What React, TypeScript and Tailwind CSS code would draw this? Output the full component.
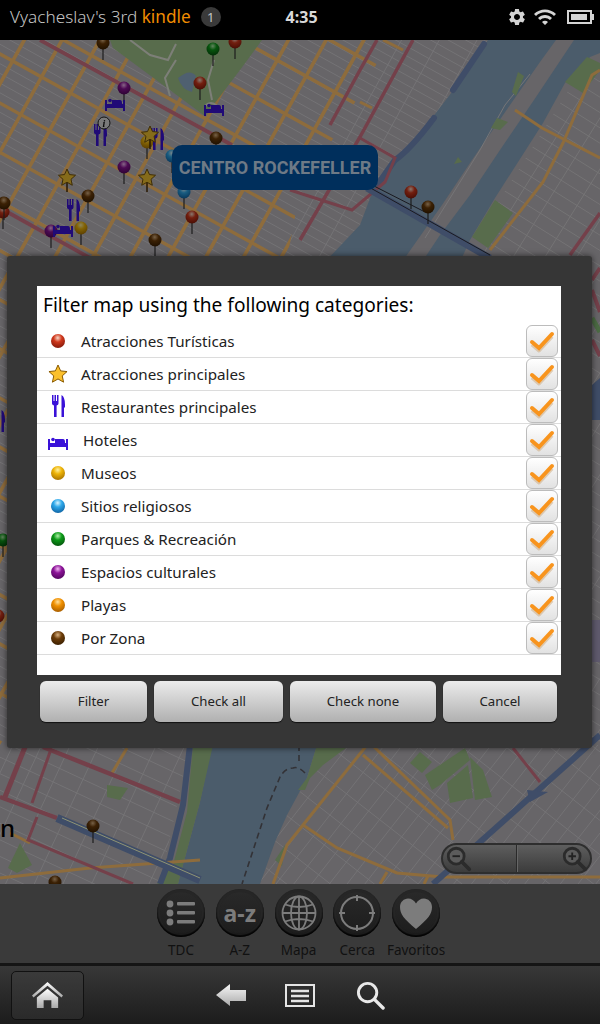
import { MdSettings, MdWifi } from "react-icons/md";

const categories = [
  { label: "Atracciones Turísticas", icon: "red" },
  { label: "Atracciones principales", icon: "star" },
  { label: "Restaurantes principales", icon: "fork" },
  { label: "Hoteles", icon: "bed" },
  { label: "Museos", icon: "yellow" },
  { label: "Sitios religiosos", icon: "blue" },
  { label: "Parques & Recreación", icon: "green" },
  { label: "Espacios culturales", icon: "purple" },
  { label: "Playas", icon: "orange" },
  { label: "Por Zona", icon: "brown" },
];

const balls: Record<string, [string, string, string]> = {
  red: ["#f8d8c8", "#d0381c", "#7c1608"],
  yellow: ["#fff2a0", "#eeb408", "#a06c00"],
  blue: ["#d8f4ff", "#2ea8ea", "#0c5c9c"],
  green: ["#b0f0a8", "#0c9a18", "#044c0c"],
  purple: ["#f4b8f4", "#8c1498", "#4c0458"],
  orange: ["#ffe09c", "#f09000", "#a05800"],
  brown: ["#d8b080", "#6c3c08", "#341c00"],
};

const LAND = "#676568";
const ROAD = "#8e6c3c";
const RED = "#74404a";
const WATER = "#4b5c6b";
const PARK = "#586c4c";
const STREET = "#767577";
const HIGHWAY = "#3f4d68";

function gridPath(spacing: number, offset = 0) {
  let d = "";
  for (let x = -1200 + offset; x < 1200; x += spacing) d += `M${x} -1200V1200`;
  return d;
}

function BallDefs() {
  return (
    <defs>
      {Object.entries(balls).map(([name, [a, b, c]]) => (
        <radialGradient key={name} id={`ball-${name}`} cx="0.48" cy="0.28" r="0.78">
          <stop offset="0" stopColor={a} />
          <stop offset="0.38" stopColor={b} />
          <stop offset="1" stopColor={c} />
        </radialGradient>
      ))}
    </defs>
  );
}

function StarShape({ x, y, r, fill, stroke }: { x: number; y: number; r: number; fill: string; stroke: string }) {
  const pts = Array.from({ length: 10 }, (_, i) => {
    const rad = i % 2 ? r * 0.47 : r;
    const a = (Math.PI / 5) * i - Math.PI / 2;
    return `${x + rad * Math.cos(a)},${y + rad * Math.sin(a)}`;
  }).join(" ");
  return <polygon points={pts} fill={fill} stroke={stroke} strokeWidth="1" />;
}

function ForkShape({ x, y }: { x: number; y: number }) {
  return (
    <g transform={`translate(${x} ${y})`} fill="#3a12d8">
      <path d="M0 0h1.500v6h1V0h1.500v6h1V0H6.500v8.500Q6.500 10 4.600 10.500V22H2V10.500Q0 10 0 8.500Z" />
      <path d="M9.500 22V0Q13 2 13 9.500V12.500h-1V22Z" />
    </g>
  );
}

function BedShape({ x, y }: { x: number; y: number }) {
  return (
    <g transform={`translate(${x} ${y})`} fill="#3a12d8">
      <path d="M0 3h2v4h16V3h2v11h-2v-3H2v3H0Z" />
      <circle cx="5" cy="3.500" r="1.800" />
      <path d="M7 3h8q2 0 2 3v1H7Z" />
    </g>
  );
}

function Pin({ x, y, c, stem = 17 }: { x: number; y: number; c: string; stem?: number }) {
  return (
    <g>
      <line x1={x} y1={y} x2={x} y2={y + stem} stroke="#333" strokeWidth="1.200" />
      <circle cx={x} cy={y} r="6.500" fill={`url(#ball-${c})`} />
    </g>
  );
}

function MapStar({ x, y }: { x: number; y: number }) {
  return (
    <g>
      <line x1={x} y1={y} x2={x} y2={y + 14} stroke="#4a2c00" strokeWidth="1.500" />
      <StarShape x={x} y={y} r={9} fill="#f2c230" stroke="#70500a" />
    </g>
  );
}

function CityMap() {
  return (
    <svg viewBox="0 40 600 844" className="absolute inset-0 h-full w-full">
      <BallDefs />
      <defs>
        <clipPath id="west">
          <polygon points="0,40 500,40 340,270 0,745" />
        </clipPath>
        <clipPath id="west-roads">
          <polygon points="0,40 390,40 345,120 300,190 285,270 0,745" />
        </clipPath>
        <clipPath id="east">
          <polygon points="600,40 600,745 500,745 460,262" />
        </clipPath>
        <clipPath id="brooklyn">
          <polygon points="317,745 600,745 600,884 255,884" />
        </clipPath>
        <clipPath id="lic">
          <polygon points="0,745 190,745 160,884 0,884" />
        </clipPath>
      </defs>
      <rect x="0" y="40" width="600" height="844" fill={LAND} />

      {/* manhattan streets */}
      <g fill="none">
        <g clipPath="url(#west)">
          <g transform="rotate(29 200 150)">
            <path d={gridPath(33, 5)} stroke={STREET} strokeWidth="0.800" />
            <path d={gridPath(8.500, 2)} stroke={STREET} strokeWidth="0.800" transform="rotate(90 200 150)" />
          </g>
        </g>
        <g clipPath="url(#west-roads)">
          <g transform="rotate(29 200 150)">
            <path d={gridPath(33, 5)} stroke={ROAD} strokeWidth="3.600" />
            <path d={gridPath(43, 37)} stroke={ROAD} strokeWidth="3.400" transform="rotate(90 200 150)" />
          </g>
        </g>
        <path d="M40 40L232 145M0 208L90 258" stroke={RED} strokeWidth="3.800" />
        <path d="M377 40L360 70L330 125M413 40L360 137L300 240" stroke={RED} strokeWidth="3.500" />
        <path d="M383 40L403 50M360 102L372 108" stroke={ROAD} strokeWidth="3" />
      </g>

      {/* queens streets */}
      <g clipPath="url(#east)" fill="none">
        <g transform="rotate(32 540 180)">
          <path d={gridPath(27, 3)} stroke={STREET} strokeWidth="0.800" />
          <path d={gridPath(13)} stroke={STREET} strokeWidth="0.800" transform="rotate(90 540 180)" />
        </g>
      </g>

      {/* south side streets */}
      <g clipPath="url(#brooklyn)" fill="none">
        <g transform="rotate(38 400 800)">
          <path d={gridPath(14)} stroke={STREET} strokeWidth="0.800" />
          <path d={gridPath(27, 8)} stroke={STREET} strokeWidth="0.800" transform="rotate(90 400 800)" />
        </g>
      </g>
      <g clipPath="url(#lic)" fill="none">
        <g transform="rotate(25 80 800)">
          <path d={gridPath(26)} stroke={STREET} strokeWidth="0.800" />
          <path d={gridPath(15)} stroke={STREET} strokeWidth="0.800" transform="rotate(90 80 800)" />
        </g>
      </g>

      {/* central park */}
      <polygon points="110,40 262,40 240,70 205,116 113,48" fill={PARK} />
      <path d="M130 40L150 55L168 60L176 44M176 60L165 78L170 96M214 60L208 80L212 100" fill="none" stroke="#7d7f78" strokeWidth="2" />
      <path d="M178 78Q190 68 196 76L192 92Q182 90 178 78Z" fill="#4f6070" />
      <path d="M205 106q6-6 12 0" fill="none" stroke="#7d7f78" strokeWidth="2" />

      {/* east river */}
      <polygon points="488,40 563,40 517,107 480,163 450,210 415,262 325,262 360,225 375,185 400,155 432,118 452,92" fill={WATER} />
      <polygon points="574,40 600,40 600,53 590,57 565,83 543,123 495,198 470,240 460,262 405,262 450,210 480,163 517,107 563,40" fill={WATER} />
      <polygon points="540,62 556,40 574,40 534,100 500,150 470,195 440,235 422,262 402,262 442,205 472,160 510,105" fill={LAND} />
      <path d="M484 44L453 90" stroke={HIGHWAY} strokeWidth="6" strokeLinecap="round" fill="none" />
      <path d="M434 118Q410 150 395 160L378 184" stroke={HIGHWAY} strokeWidth="6" strokeLinecap="round" fill="none" />
      <path d="M530 74L505 105L480 150L452 195L425 238" stroke={STREET} strokeWidth="1" fill="none" />

      {/* island parks and queens roads */}
      <polygon points="518,72 524,76 516,96 512,92" fill={PARK} />
      <polygon points="497,118 508,122 500,130 491,128" fill={PARK} />
      <polygon points="458,157 462,162 454,164" fill={PARK} />
      <polygon points="565,82 587,57 600,63 600,70 583,93" fill={PARK} />
      <polygon points="495,200 513,213 488,248 472,237" fill={PARK} />
      <path d="M600 70L592 75L563 143L543 182L490 250" stroke={ROAD} strokeWidth="3" fill="none" />
      <path d="M515 110L542 128L600 158" stroke={ROAD} strokeWidth="3" fill="none" />
      <path d="M600 213L570 255" stroke={RED} strokeWidth="3.500" />
      <path d="M360 138L395 158L385 182L352 210L290 190" stroke={RED} strokeWidth="3" fill="none" />
      <path d="M367 188L490 258" stroke={HIGHWAY} strokeWidth="7" />
      <path d="M367 186L490 255M372 185L425 212" stroke="#1a1a20" strokeWidth="1" fill="none" />

      {/* right edge beside the dialog */}
      <path d="M592 280L600 268M592 290L600 312M592 340L600 356" stroke={RED} strokeWidth="4" />
      <path d="M592 318L600 332" stroke="#4c6b44" strokeWidth="5" />
      <polygon points="592,385 600,378 600,420 592,420" fill={HIGHWAY} />
      <polygon points="592,620 600,620 600,662 592,662" fill="#5f5a6d" />

      {/* south: river */}
      <polygon points="212,745 317,745 307,778 287,815 275,842 260,884 178,884 183,865 200,802" fill={WATER} />
      <polygon points="193,745 213,745 200,802 183,865 178,884 157,884 173,865 187,812" fill={PARK} />
      <path d="M190 745L183 805L170 858L160 884" stroke={HIGHWAY} strokeWidth="6" fill="none" />
      <path d="M299 745V765M305 773Q298 766 293 768Q285 768 280 777L267 808L242 884" stroke="#333236" strokeWidth="1.600" strokeDasharray="6 4" fill="none" />
      <polygon points="317,745 350,745 323,765 310,778 305,790 298,790 307,778" fill={PARK} />

      {/* south: parks and roads */}
      <polygon points="410,763 420,752 432,762 422,773" fill={PARK} />
      <polygon points="425,775 465,748 470,760 440,785 432,790" fill={PARK} />
      <polygon points="447,783 468,765 473,798 450,803" fill={PARK} />
      <polygon points="470,757 483,770 492,797 475,800" fill={PARK} />
      <polygon points="275,860 285,845 282,866" fill={PARK} />
      <g fill="none" stroke={ROAD} strokeWidth="3">
        <path d="M367 745L303 825L287 845L273 884" />
        <path d="M363 755L448 828" />
        <path d="M372 745L450 820L453 840" />
        <path d="M303 825L337 848L397 873L443 877H600" />
        <path d="M387 872L380 884M428 876L424 884" />
        <path d="M127 748L112 773M0 878L90 868L200 860M10 833L30 843" />
      </g>
      <path d="M433 884L600 735" stroke={HIGHWAY} strokeWidth="6" />
      <path d="M513 748L540 782" stroke={RED} strokeWidth="3" />
      <polygon points="527,790 548,792 530,802" fill={HIGHWAY} />

      <g fill="none" stroke={RED}>
        <path d="M25 747L5 797" strokeWidth="5" />
        <path d="M50 752L32 803" strokeWidth="3" />
        <path d="M0 797L57 818" strokeWidth="4" />
        <path d="M37 817L28 840L133 884" strokeWidth="3" />
        <path d="M43 747L133 783L180 802" strokeWidth="4.500" />
      </g>
      <path d="M57 818L200 880" stroke={HIGHWAY} strokeWidth="8" />
      <path d="M62 818L200 878" stroke="#8f9474" strokeWidth="1" />
      <polygon points="107,785 128,788 120,800 107,797" fill={PARK} />
      <polygon points="20,843 32,865 17,873 8,868" fill={PARK} />

      {/* pins dimmed like the map */}
      <g className="brightness-[.55]">
        <Pin x={103} y={43} c="brown" />
        <Pin x={213} y={49} c="green" />
        <Pin x={235} y={42} c="red" />
        <Pin x={124} y={88} c="purple" />
        <Pin x={200} y={83} c="red" />
        <Pin x={147} y={142} c="yellow" />
        <Pin x={216} y={138} c="brown" />
        <Pin x={172} y={156} c="blue" />
        <Pin x={124} y={167} c="purple" />
        <Pin x={88} y={196} c="brown" />
        <Pin x={184} y={192} c="blue" />
        <Pin x={192} y={217} c="red" />
        <Pin x={3} y={212} c="red" />
        <Pin x={4} y={203} c="brown" />
        <Pin x={51} y={231} c="purple" />
        <Pin x={81} y={228} c="yellow" />
        <Pin x={155} y={240} c="brown" />
        <Pin x={411} y={192} c="red" />
        <Pin x={428} y={207} c="brown" />
        <Pin x={93} y={826} c="brown" />
        <Pin x={55} y={882} c="brown" />
        <Pin x={3} y={540} c="green" />
        <Pin x={-2} y={616} c="red" />
        <ForkShape x={94} y={124} />
        <ForkShape x={151} y={128} />
        <ForkShape x={67} y={199} />
        <ForkShape x={-8} y={410} />
        <MapStar x={150} y={135} />
        <MapStar x={67} y={178} />
        <MapStar x={147} y={178} />
        <BedShape x={105} y={97} />
        <BedShape x={204} y={102} />
        <BedShape x={53} y={223} />
        <circle cx="104" cy="123" r="6" fill="#ddd" stroke="#222" />
        <text x="104" y="127" textAnchor="middle" fontSize="10" fontStyle="italic" fontWeight="700" fontFamily="Liberation Serif, serif" fill="#111">i</text>
      </g>
    </svg>
  );
}

function StatusBar() {
  return (
    <div className="relative flex h-10 items-center bg-black pb-[6px] pl-[10px] pr-2 text-[#c4c4c4]">
      <span className="text-[17.2px] font-light leading-none [font-family:'Noto_Sans',sans-serif]">
        Vyacheslav's 3rd <span className="font-normal text-[#f08c00]">kindle</span>
      </span>
      <span className="ml-[10px] grid h-5 w-5 place-items-center rounded-full bg-[#3a3a3a] text-[13px] leading-none [font-family:'Noto_Sans',sans-serif]">1</span>
      <span className="ml-[65px] text-[16px] font-bold leading-none text-[#d8d8d8] [font-family:'Noto_Sans',sans-serif]">4:35</span>
      <div className="ml-auto flex items-center gap-[6px]">
        <MdSettings size={20} className="text-[#d4d4d4]" />
        <MdWifi size={24} className="text-[#d4d4d4]" />
        <div className="relative ml-[4px] h-[14px] w-[25px] border-2 border-[#d4d4d4] p-[2px]">
          <div className="h-full w-[16px] bg-[#d4d4d4]" />
          <div className="absolute -right-[4px] top-[2px] h-[6px] w-[2px] bg-[#d4d4d4]" />
        </div>
      </div>
    </div>
  );
}

function RowIcon({ icon }: { icon: string }) {
  return (
    <svg viewBox="0 0 30 30" className="h-[30px] w-[30px] shrink-0">
      {icon === "star" && <StarShape x={15} y={15.5} r={9.5} fill="#fbc02d" stroke="#8a5a00" />}
      {icon === "fork" && <ForkShape x={9} y={3} />}
      {icon === "bed" && <BedShape x={5} y={11} />}
      {balls[icon] && <circle cx="15" cy="15" r="7" fill={`url(#ball-${icon})`} />}
    </svg>
  );
}

function Checkbox() {
  return (
    <div className="h-8 w-8 shrink-0 rounded-[6px] border border-[#bcbcbc] bg-gradient-to-b from-white to-[#e2e2e2]">
      <svg viewBox="0 0 30 30" className="h-full w-full">
        <polyline points="5,17 12,23 25,9" fill="none" stroke="#c9a06a" strokeOpacity="0.45" strokeWidth="4" strokeLinejoin="round" transform="translate(0 1.5)" />
        <polyline points="5,16 12,22 25,8" fill="none" stroke="#f8941d" strokeWidth="4" strokeLinecap="round" strokeLinejoin="miter" />
      </svg>
    </div>
  );
}

function DialogButton({ label, className }: { label: string; className: string }) {
  return (
    <button className={`h-[41px] rounded-[6px] bg-gradient-to-b from-[#ececec] to-[#b0b0b0] text-[13.2px] text-[#222] shadow-[0_1px_1px_#111] ${className}`}>
      {label}
    </button>
  );
}

function FilterDialog() {
  return (
    <div className="absolute left-[7px] top-[216px] h-[492px] w-[585px] rounded-[3px] bg-[#363636] px-[30px] pt-[30px] shadow-[0_0_6px_rgba(0,0,0,.6)] [font-family:'Noto_Sans',sans-serif]">
      <div className="h-[389px] w-[524px] bg-white">
        <svg className="absolute h-0 w-0"><BallDefs /></svg>
        <div className="flex h-[39px] items-center pl-[6px] pt-[1px] text-[19.1px] leading-none text-black">
          Filter map using the following categories:
        </div>
        {categories.map((c) => (
          <div key={c.label} className="flex h-[33px] items-center border-b border-[#dcdcdc] pl-[6px] pr-[3px] text-[15.2px] text-[#222]">
            <RowIcon icon={c.icon} />
            <span className={c.icon === "bed" ? "ml-[10px]" : "ml-2"}>{c.label}</span>
            <div className="ml-auto h-8"><Checkbox /></div>
          </div>
        ))}
      </div>
      <div className="mt-[6px] flex gap-[7px] pl-[3px]">
        <DialogButton label="Filter" className="w-[107px]" />
        <DialogButton label="Check all" className="w-[129px]" />
        <DialogButton label="Check none" className="w-[146px]" />
        <DialogButton label="Cancel" className="w-[114px]" />
      </div>
    </div>
  );
}

function MagnifierGlyph({ minus }: { minus?: boolean }) {
  return (
    <svg viewBox="0 0 30 30" className="h-[28px] w-[28px]" fill="none" stroke="#2b2b2b">
      <circle cx="12" cy="12" r="8.500" strokeWidth="3" fill="#5c5c5c" />
      <path d="M18 18l8 8" strokeWidth="4" strokeLinecap="round" />
      <path d={minus ? "M8 12h8" : "M8 12h8M12 8v8"} strokeWidth="2" stroke="#222" />
    </svg>
  );
}

function ZoomControl() {
  return (
    <div className="absolute left-[441px] top-[803px] flex h-[31px] w-[151px] rounded-full border-2 border-[#2e2e2e] bg-gradient-to-b from-[#5e5e5e] to-[#3c3c3c]">
      <div className="flex w-[74px] items-center border-r border-[#2a2a2a] pl-[2px]">
        <MagnifierGlyph minus />
      </div>
      <div className="flex flex-1 items-center justify-end border-l border-[#666] pr-[1px]">
        <MagnifierGlyph />
      </div>
    </div>
  );
}

function RoundIcon({ name }: { name: string }) {
  if (name === "list")
    return (
      <svg viewBox="0 0 48 48" className="h-full w-full" fill="#7c7c7c">
        <circle cx="13" cy="15" r="3.400" /><circle cx="13" cy="24" r="3.400" /><circle cx="13" cy="33" r="3.400" />
        <rect x="20" y="13" width="18" height="3.400" rx="1" /><rect x="20" y="22" width="18" height="3.400" rx="1" /><rect x="20" y="31" width="18" height="3.400" rx="1" />
      </svg>
    );
  if (name === "az")
    return <span className="text-[23px] font-bold leading-none text-[#7c7c7c] [font-family:'Noto_Sans',sans-serif]">a-z</span>;
  if (name === "globe")
    return (
      <svg viewBox="0 0 48 48" className="h-full w-full" fill="none" stroke="#7c7c7c" strokeWidth="1.800">
        <circle cx="24" cy="24" r="16.500" />
        <ellipse cx="24" cy="24" rx="8" ry="16.500" />
        <path d="M24 7.500v33M7.500 24h33M10 15.500q14 5 28 0M10 32.500q14-5 28 0" />
      </svg>
    );
  if (name === "target")
    return (
      <svg viewBox="0 0 48 48" className="h-full w-full" fill="none" stroke="#7c7c7c" strokeWidth="2">
        <circle cx="24" cy="24" r="16" />
        <path d="M24 6v6M24 36v6M6 24h6M36 24h6" />
      </svg>
    );
  return (
    <svg viewBox="0 0 48 48" className="h-full w-full" fill="#7c7c7c">
      <path d="M24 40C12 30 8 25 8 18c0-5 4-8.500 8-8.500 3.500 0 6.500 2 8 5 1.500-3 4.500-5 8-5 4 0 8 3.500 8 8.500 0 7-4 12-16 22Z" />
    </svg>
  );
}

const tools = [
  { label: "TDC", icon: "list" },
  { label: "A-Z", icon: "az" },
  { label: "Mapa", icon: "globe" },
  { label: "Cerca", icon: "target" },
  { label: "Favoritos", icon: "heart" },
];

function Toolbar() {
  return (
    <div className="flex h-[79px] justify-center gap-[10.75px] bg-[#3a3a3a] pr-[3px] pt-[5px] [font-family:'Noto_Sans',sans-serif]">
      {tools.map((t) => (
        <div key={t.label} className="flex w-[48px] flex-col items-center">
          <div className="grid h-[48px] w-[48px] place-items-center rounded-full bg-gradient-to-b from-[#2a2a2a] to-[#1c1c1c] shadow-[inset_0_-2px_2px_#000,inset_0_0_0_3px_#262626]">
            <RoundIcon name={t.icon} />
          </div>
          <span className="mt-[4px] whitespace-nowrap text-[13.5px] leading-[18px] text-[#111]">{t.label}</span>
        </div>
      ))}
    </div>
  );
}

function NavBar() {
  return (
    <div className="border-t-[3px] border-[#151515] bg-gradient-to-b from-[#383838] to-[#1c1c1c]">
      <div className="flex h-[58px] items-center pl-[11px]">
        <div className="grid h-[49px] w-[73px] place-items-center rounded-[5px] border border-[#111] bg-gradient-to-b from-[#3a3a3a] to-[#2a2a2a]">
          <svg viewBox="0 0 34 30" className="h-[29px] w-[33px]">
            <defs>
              <linearGradient id="chrome" x1="0" y1="0" x2="0" y2="1">
                <stop offset="0" stopColor="#fff" />
                <stop offset="1" stopColor="#a8a8a8" />
              </linearGradient>
            </defs>
            <path d="M17 1L33 15l-1.500 2L17 5 2.500 17 1 15Z" fill="url(#chrome)" />
            <path d="M17 8L28 17v11h-7v-8h-8v8H6V17Z" fill="url(#chrome)" />
          </svg>
        </div>
        <svg viewBox="0 0 32 26" className="ml-[131px] h-[26px] w-[32px]">
          <defs>
            <linearGradient id="back" x1="0" y1="0" x2="0" y2="1">
              <stop offset="0" stopColor="#f8f8f8" />
              <stop offset="1" stopColor="#aaa" />
            </linearGradient>
          </defs>
          <path d="M1 13L15 2v6h16v11H15v5Z" fill="url(#back)" />
        </svg>
        <svg viewBox="0 0 30 24" className="ml-[38px] h-[24px] w-[30px]" fill="none" stroke="#e4e4e4" strokeWidth="2">
          <path d="M1 23V2h28v21Z" />
          <path d="M6 8h18M6 13h18M6 18h18" strokeWidth="2.400" />
        </svg>
        <svg viewBox="0 0 30 30" className="ml-[41px] h-[29px] w-[29px]" fill="none" stroke="#e8e8e8">
          <circle cx="12" cy="12" r="9.500" strokeWidth="3" />
          <path d="M19 19l9 9" strokeWidth="3.500" strokeLinecap="round" />
        </svg>
      </div>
    </div>
  );
}

export default function App() {
  return (
    <div className="flex h-[1024px] w-[600px] flex-col overflow-hidden bg-black">
      <StatusBar />
      <main className="relative flex-1 overflow-hidden">
        <CityMap />
        <div className="absolute left-[172px] top-[105px] flex h-[45px] w-[206px] items-center justify-center rounded-[10px] bg-[#002f5c] text-[18px] font-bold text-[#6e7a86] [font-family:Roboto,sans-serif]">
          CENTRO ROCKEFELLER
        </div>
        <span className="absolute left-0 top-[776px] text-[24px] font-medium leading-none text-black [font-family:'Noto_Sans',sans-serif]">n</span>
        <ZoomControl />
        <FilterDialog />
      </main>
      <Toolbar />
      <NavBar />
    </div>
  );
}
